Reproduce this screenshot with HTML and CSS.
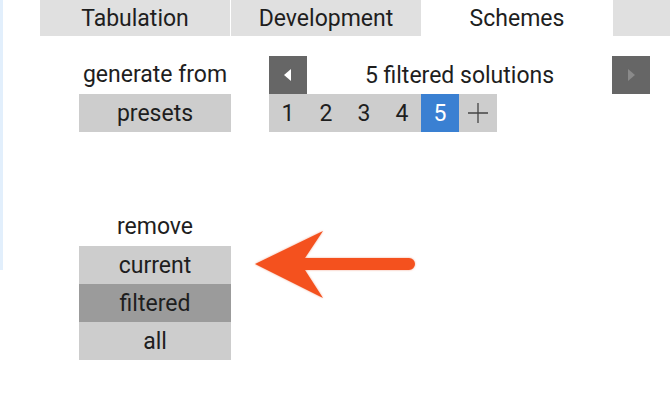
FILE: index.html
```html
<!DOCTYPE html>
<html lang="en">
<head>
    <meta charset="UTF-8">
    <meta name="viewport" content="width=device-width, initial-scale=1.0">
    <title>Schemes</title>
    <link rel="stylesheet" href="styles.css">
</head>
<body>

    <div class="edge"></div>

    <div class="tabs">
        <div class="tab">Tabulation</div>
        <div class="tab">Development</div>
        <div class="tab active">Schemes</div>
        <div class="tab rest"></div>
    </div>

    <div class="panel">
        <div class="left">
            <div class="label">generate from</div>
            <button class="btn">presets</button>
            <div class="spacer"></div>
            <div class="label">remove</div>
            <button class="btn">current</button>
            <button class="btn selected">filtered</button>
            <button class="btn">all</button>
        </div>

        <div class="right">
            <div class="nav">
                <button class="arrow" aria-label="Previous">
                    <svg width="8" height="12" viewBox="0 0 8 12"><path d="M7 0 L0 6 L7 12 Z" fill="#fff"/></svg>
                </button>
                <div class="count">5 filtered solutions</div>
                <button class="arrow off" aria-label="Next">
                    <svg width="8" height="12" viewBox="0 0 8 12"><path d="M1 0 L8 6 L1 12 Z" fill="#8a8a8a"/></svg>
                </button>
            </div>
            <div class="pages">
                <button class="page">1</button>
                <button class="page">2</button>
                <button class="page">3</button>
                <button class="page">4</button>
                <button class="page current">5</button>
                <button class="page" aria-label="Add">
                    <svg width="20" height="20" viewBox="0 0 20 20"><path d="M10 0 V20 M0 10 H20" stroke="#444" stroke-width="1.3"/></svg>
                </button>
            </div>
        </div>
    </div>

    <svg class="pointer" width="180" height="80" viewBox="0 0 180 80">
        <defs>
            <filter id="soft" x="-10%" y="-10%" width="120%" height="120%">
                <feGaussianBlur stdDeviation="0.8"/>
            </filter>
        </defs>
        <path d="M5 39 L73 6 L55 33 L159 33 A6 6 0 0 1 159 45 L55 45 L73 73 Z" fill="#e8744f" filter="url(#soft)" opacity="0.6"/>
        <path d="M5 39 L73 6 L55 33 L159 33 A6 6 0 0 1 159 45 L55 45 L73 73 Z" fill="#f4511e"/>
    </svg>

</body>
</html>
```

FILE: styles.css
```css
body {
    margin: 0;
    background: #fff;
    font-family: Roboto, "Liberation Sans", sans-serif;
    font-size: 23px;
    color: #1e1e1e;
    width: 670px;
    height: 418px;
    overflow: hidden;
    position: relative;
}
.edge {
    position: absolute;
    left: 0;
    top: 0;
    width: 3px;
    height: 270px;
    background: #e2effc;
}
.tabs {
    display: flex;
    margin-left: 40px;
    height: 36px;
}
.tab {
    width: 190px;
    margin-right: 1px;
    background: #e0e0e0;
    display: flex;
    align-items: center;
    justify-content: center;
}
.tab.active {
    background: #fff;
}
.tab.rest {
    flex: 1;
    margin-right: 0;
}
.panel {
    display: flex;
    gap: 38px;
    margin: 20px 0 0 79px;
}
.left {
    width: 152px;
    display: flex;
    flex-direction: column;
}
.label {
    height: 38px;
    line-height: 38px;
    text-align: center;
}
.spacer {
    height: 76px;
}
button {
    font: inherit;
    color: inherit;
    border: none;
    padding: 0;
    margin: 0;
    cursor: pointer;
}
.btn {
    height: 38px;
    background: #cdcdcd;
}
.btn.selected {
    background: #9b9b9b;
}
.right {
    width: 381px;
}
.nav {
    display: flex;
    height: 38px;
    align-items: center;
}
.arrow {
    width: 38px;
    height: 38px;
    background: #666;
    display: flex;
    align-items: center;
    justify-content: center;
}
.count {
    flex: 1;
    text-align: center;
}
.pages {
    display: flex;
}
.page {
    width: 38px;
    height: 38px;
    background: #cdcdcd;
    display: flex;
    align-items: center;
    justify-content: center;
}
.page.current {
    background: #3a80d2;
    color: #fff;
}
.pointer {
    position: absolute;
    left: 250px;
    top: 225px;
}
```
